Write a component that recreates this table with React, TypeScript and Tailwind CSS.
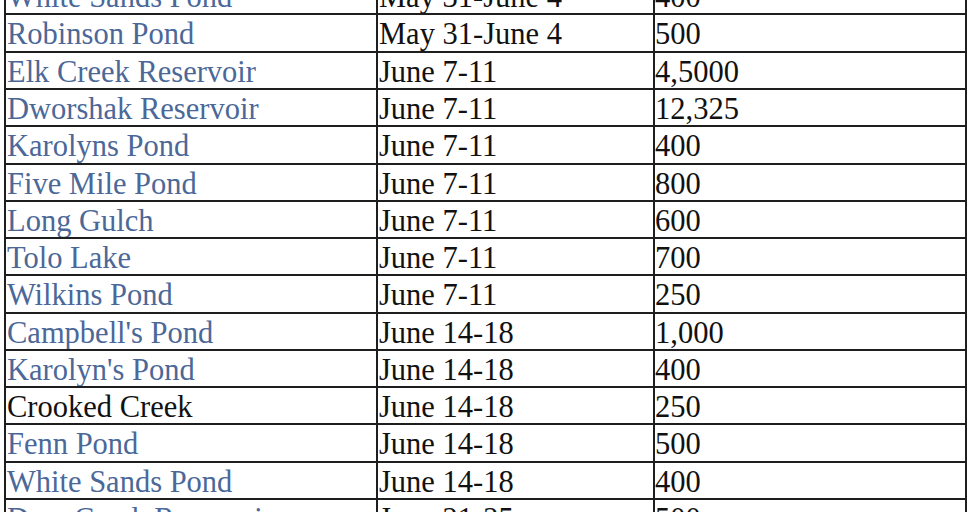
import React from "react";

type Row = { name: string; date: string; count: string; black?: boolean };

const rows: Row[] = [
  { name: "White Sands Pond", date: "May 31-June 4", count: "400" },
  { name: "Robinson Pond", date: "May 31-June 4", count: "500" },
  { name: "Elk Creek Reservoir", date: "June 7-11", count: "4,5000" },
  { name: "Dworshak Reservoir", date: "June 7-11", count: "12,325" },
  { name: "Karolyns Pond", date: "June 7-11", count: "400" },
  { name: "Five Mile Pond", date: "June 7-11", count: "800" },
  { name: "Long Gulch", date: "June 7-11", count: "600" },
  { name: "Tolo Lake", date: "June 7-11", count: "700" },
  { name: "Wilkins Pond", date: "June 7-11", count: "250" },
  { name: "Campbell's Pond", date: "June 14-18", count: "1,000" },
  { name: "Karolyn's Pond", date: "June 14-18", count: "400" },
  { name: "Crooked Creek", date: "June 14-18", count: "250", black: true },
  { name: "Fenn Pond", date: "June 14-18", count: "500" },
  { name: "White Sands Pond", date: "June 14-18", count: "400" },
  { name: "Deer Creek Reservoir", date: "June 21-25", count: "500" },
];

export default function App() {
  return (
    <div className="h-[512px] w-[975px] overflow-hidden bg-white font-['Liberation_Serif','Times_New_Roman',serif] text-[30.5px] leading-[30px]">
      <div className="ml-[4px] mt-[-21.8px] w-[963px] border-l-2 border-[#1e1e1e]">
        {rows.map((r, i) => (
          <div
            key={i}
            className="grid h-[37.27px] grid-cols-[372px_277px_312px] border-b-2 border-[#1e1e1e]"
          >
            <div
              className={`overflow-hidden whitespace-nowrap border-r-2 border-[#1e1e1e] pl-[1px] pt-[4px] ${
                r.black ? "text-[#111]" : "text-[#4b6898]"
              }`}
            >
              {r.name}
            </div>
            <div className="overflow-hidden whitespace-nowrap border-r-2 border-[#1e1e1e] pl-[1px] pt-[4px] text-[#111]">
              {r.date}
            </div>
            <div className="overflow-hidden whitespace-nowrap border-r-2 border-[#1e1e1e] pl-0 pt-[4px] text-[#111]">
              {r.count}
            </div>
          </div>
        ))}
      </div>
    </div>
  );
}
